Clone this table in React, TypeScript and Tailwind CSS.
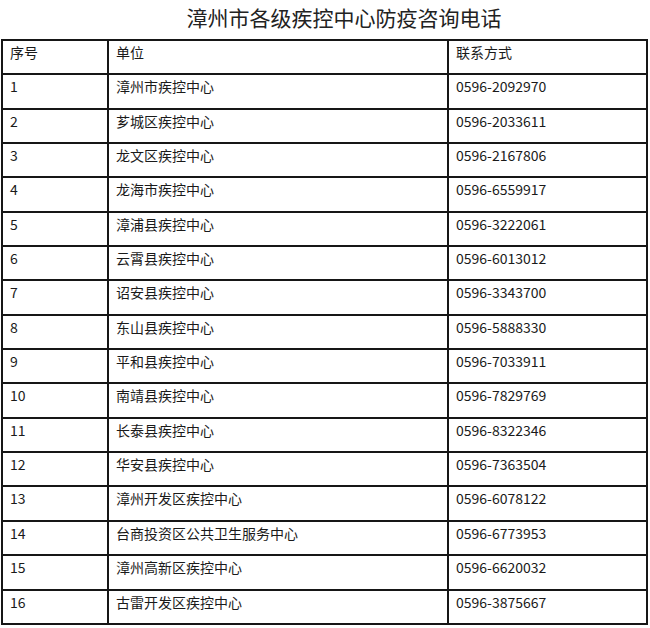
import React from "react";

const rows: [string, string, string][] = [
  ["1", "漳州市疾控中心", "0596-2092970"],
  ["2", "芗城区疾控中心", "0596-2033611"],
  ["3", "龙文区疾控中心", "0596-2167806"],
  ["4", "龙海市疾控中心", "0596-6559917"],
  ["5", "漳浦县疾控中心", "0596-3222061"],
  ["6", "云霄县疾控中心", "0596-6013012"],
  ["7", "诏安县疾控中心", "0596-3343700"],
  ["8", "东山县疾控中心", "0596-5888330"],
  ["9", "平和县疾控中心", "0596-7033911"],
  ["10", "南靖县疾控中心", "0596-7829769"],
  ["11", "长泰县疾控中心", "0596-8322346"],
  ["12", "华安县疾控中心", "0596-7363504"],
  ["13", "漳州开发区疾控中心", "0596-6078122"],
  ["14", "台商投资区公共卫生服务中心", "0596-6773953"],
  ["15", "漳州高新区疾控中心", "0596-6620032"],
  ["16", "古雷开发区疾控中心", "0596-3875667"],
];

const font = {
  fontFamily: '"Noto Sans CJK SC", "Noto Sans", sans-serif',
};

function Cell({ children }: { children: React.ReactNode }) {
  return (
    <div className="bg-white pl-[7px] text-[14px] leading-[22px] text-[#1a1a1a]">
      {children}
    </div>
  );
}

export default function App() {
  return (
    <div className="w-[650px] h-[628px] bg-white overflow-hidden" style={font}>
      <div className="h-[39px] flex items-start justify-center pl-[38px] pt-[3px]">
        <h1 className="text-[21px] leading-[28px] text-[#222] font-normal">
          漳州市各级疾控中心防疫咨询电话
        </h1>
      </div>
      <div className="ml-[1px] w-[647px] bg-[#161616] p-[2px] grid grid-cols-[104px_338px_197px] auto-rows-[32.35px] gap-[2px]">
        <Cell>序号</Cell>
        <Cell>单位</Cell>
        <Cell>联系方式</Cell>
        {rows.map(([n, u, p]) => (
          <React.Fragment key={n}>
            <Cell>{n}</Cell>
            <Cell>{u}</Cell>
            <Cell>{p}</Cell>
          </React.Fragment>
        ))}
      </div>
    </div>
  );
}
